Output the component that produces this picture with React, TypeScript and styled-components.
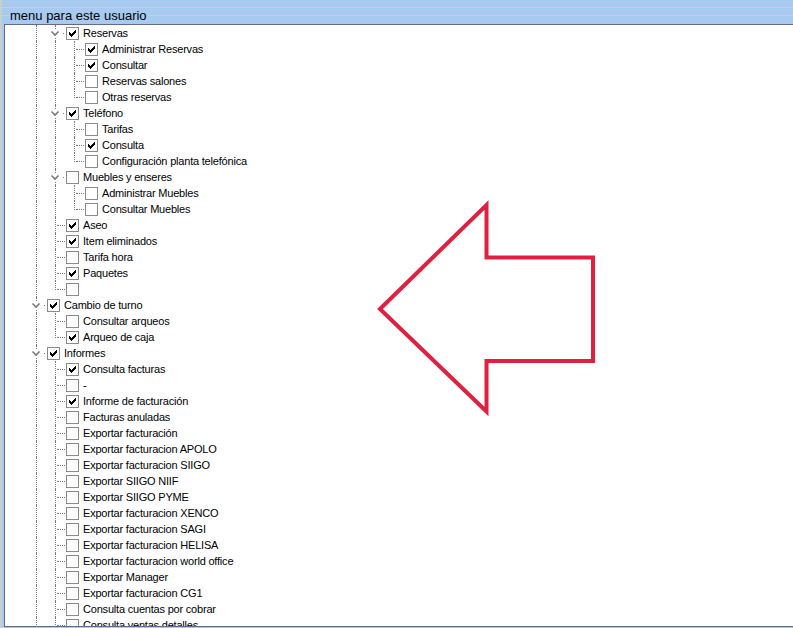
import React from "react";
import styled, { createGlobalStyle } from "styled-components";

const GlobalStyle = createGlobalStyle`
  html, body {
    margin: 0;
    padding: 0;
  }
  body {
    background: #a6caf0;
    overflow: hidden;
  }
`;

const Page = styled.div`
  position: relative;
  width: 793px;
  height: 628px;
  overflow: hidden;
  box-sizing: border-box;
  background: #a6caf0;
  border-left: 2px solid #c4d1cc;
  font-family: "Liberation Sans", Arial, sans-serif;
`;

const Header = styled.div`
  display: flex;
  flex-direction: column;
  height: 24px;
`;

const TopRule = styled.div`
  margin-top: 7px;
  height: 1px;
  background: #cdd1c8;
`;

const LegendRow = styled.div`
  display: flex;
  height: 16px;
`;

const LegendRule = styled.div<{ $grow?: boolean }>`
  flex: ${(p) => (p.$grow ? "1 1 auto" : "0 0 8px")};
  margin-top: 7px;
  height: 1px;
  background: #cdd1c8;
`;

const LegendText = styled.span`
  font-size: 13px;
  line-height: 16px;
  color: #000;
  white-space: nowrap;
  padding-right: 1px;
`;

const TreePanel = styled.div`
  margin-left: 2px;
  height: 603px;
  box-sizing: border-box;
  border: 1px solid #68688e;
  border-right: none;
  background: #fff;
  overflow: hidden;
  padding-left: 23px;
`;

const Row = styled.div`
  display: flex;
  align-items: flex-start;
  height: 16px;
`;

type VLine = "none" | "full" | "top";

const Cell = styled.div<{ $v: VLine; $h: boolean }>`
  position: relative;
  flex: 0 0 19px;
  height: 16px;

  &::before {
    content: "";
    display: ${(p) => (p.$v === "none" ? "none" : "block")};
    position: absolute;
    left: 8px;
    top: 0;
    height: ${(p) => (p.$v === "top" ? "9px" : "16px")};
    border-left: 1px dotted #77778a;
  }

  &::after {
    content: "";
    display: ${(p) => (p.$h ? "block" : "none")};
    position: absolute;
    left: 10px;
    top: 8px;
    width: 8px;
    border-top: 1px dotted #77778a;
  }
`;

const Chevron = styled.svg`
  position: absolute;
  left: 3px;
  top: 5px;
  background: #fff;
`;

const Dot = styled.span`
  position: absolute;
  left: 16px;
  top: 8px;
  width: 1px;
  height: 1px;
  background: #77778a;
`;

const Box = styled.span`
  position: relative;
  flex: 0 0 13px;
  width: 13px;
  height: 13px;
  margin-top: 2px;
  margin-right: 4px;
  box-sizing: border-box;
  border: 1px solid #8b8b8b;
  background: #fff;
`;

const Tick = styled.svg`
  position: absolute;
  left: 2px;
  top: 2px;
`;

const Label = styled.span`
  font-size: 11px;
  letter-spacing: -0.2px;
  line-height: 16px;
  color: #000;
  white-space: nowrap;
`;

const ArrowMark = styled.svg`
  position: absolute;
  left: 374px;
  top: 200px;
  overflow: visible;
  pointer-events: none;
`;

type Item = { level: number; label: string; checked?: boolean; open?: boolean };

const items: Item[] = [
  { level: 1, label: "Reservas", checked: true, open: true },
  { level: 2, label: "Administrar Reservas", checked: true },
  { level: 2, label: "Consultar", checked: true },
  { level: 2, label: "Reservas salones" },
  { level: 2, label: "Otras reservas" },
  { level: 1, label: "Teléfono", checked: true, open: true },
  { level: 2, label: "Tarifas" },
  { level: 2, label: "Consulta", checked: true },
  { level: 2, label: "Configuración planta telefónica" },
  { level: 1, label: "Muebles y enseres", open: true },
  { level: 2, label: "Administrar Muebles" },
  { level: 2, label: "Consultar Muebles" },
  { level: 1, label: "Aseo", checked: true },
  { level: 1, label: "Item eliminados", checked: true },
  { level: 1, label: "Tarifa hora" },
  { level: 1, label: "Paquetes", checked: true },
  { level: 1, label: "" },
  { level: 0, label: "Cambio de turno", checked: true, open: true },
  { level: 1, label: "Consultar arqueos" },
  { level: 1, label: "Arqueo de caja", checked: true },
  { level: 0, label: "Informes", checked: true, open: true },
  { level: 1, label: "Consulta facturas", checked: true },
  { level: 1, label: "-" },
  { level: 1, label: "Informe de facturación", checked: true },
  { level: 1, label: "Facturas anuladas" },
  { level: 1, label: "Exportar facturación" },
  { level: 1, label: "Exportar facturacion APOLO" },
  { level: 1, label: "Exportar facturacion SIIGO" },
  { level: 1, label: "Exportar SIIGO NIIF" },
  { level: 1, label: "Exportar SIIGO PYME" },
  { level: 1, label: "Exportar facturacion XENCO" },
  { level: 1, label: "Exportar facturacion SAGI" },
  { level: 1, label: "Exportar facturacion HELISA" },
  { level: 1, label: "Exportar facturacion world office" },
  { level: 1, label: "Exportar Manager" },
  { level: 1, label: "Exportar facturacion CG1" },
  { level: 1, label: "Consulta cuentas por cobrar" },
  { level: 1, label: "Consulta ventas detalles" },
];

// the list goes on below the visible part
const scan = [...items.map((i) => i.level), 1, 0];

// does the node at `depth` that owns row i have another sibling further down?
function hasNext(i: number, depth: number) {
  for (let j = i + 1; j < scan.length; j++) {
    if (scan[j] < depth) return false;
    if (scan[j] === depth) return true;
  }
  return false;
}

const tickPixels: [number, number, number][] = [
  [6, 0, 1],
  [5, 1, 2],
  [0, 2, 1],
  [4, 2, 3],
  [0, 3, 2],
  [3, 3, 3],
  [0, 4, 5],
  [1, 5, 3],
  [2, 6, 1],
];

function CheckBox({ checked }: { checked?: boolean }) {
  return (
    <Box>
      {checked && (
        <Tick width="7" height="7" viewBox="0 0 7 7" shapeRendering="crispEdges">
          {tickPixels.map(([x, y, w]) => (
            <rect key={`${x}-${y}`} x={x} y={y} width={w} height={1} fill="#000" />
          ))}
        </Tick>
      )}
    </Box>
  );
}

function TreeRow({ item, index }: { item: Item; index: number }) {
  const cells = [];
  for (let d = 0; d < item.level; d++) {
    const v: VLine = hasNext(index, d) ? "full" : "none";
    cells.push(<Cell key={d} $v={v} $h={false} />);
  }
  const more = hasNext(index, item.level);
  if (item.open) {
    cells.push(
      <Cell key="own" $v={more ? "full" : "top"} $h={false}>
        <Chevron width="10" height="7" viewBox="0 0 10 7">
          <polyline points="1.5,1.5 5,5 8.5,1.5" fill="none" stroke="#7a7a7a" strokeWidth="1.6" />
        </Chevron>
        <Dot />
      </Cell>
    );
  } else {
    cells.push(<Cell key="own" $v={more ? "full" : "top"} $h />);
  }
  return (
    <Row>
      {cells}
      <CheckBox checked={item.checked} />
      <Label>{item.label}</Label>
    </Row>
  );
}

export default function App() {
  return (
    <Page>
      <GlobalStyle />
      <Header>
        <TopRule />
        <LegendRow>
          <LegendRule />
          <LegendText>menu para este usuario</LegendText>
          <LegendRule $grow />
        </LegendRow>
      </Header>
      <TreePanel>
        {items.map((item, i) => (
          <TreeRow key={i} item={item} index={i} />
        ))}
      </TreePanel>
      <ArrowMark width="224" height="216" viewBox="0 0 224 216">
        <polygon
          points="4,109 110.5,5 110.5,57.5 217,57.5 217,161 110.5,161 110.5,211.5"
          fill="none"
          stroke="#df2040"
          strokeWidth="4"
          strokeLinejoin="miter"
        />
      </ArrowMark>
    </Page>
  );
}
